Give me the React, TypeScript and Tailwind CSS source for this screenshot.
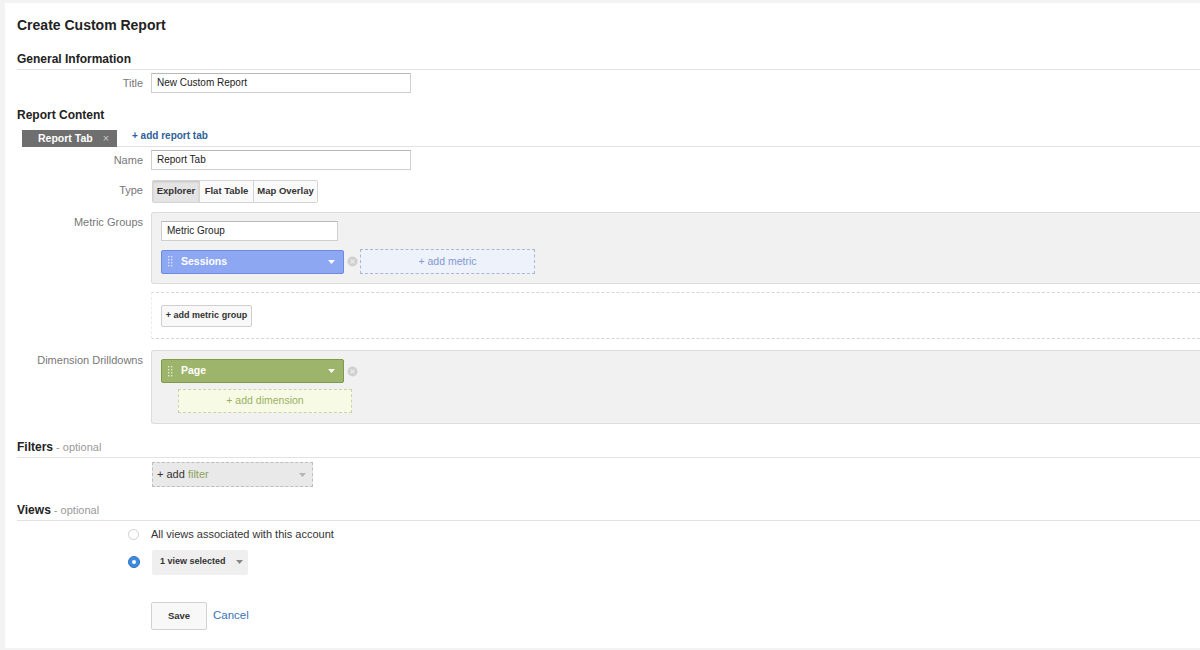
import type { ReactNode } from "react";

// Create Custom Report form (Google Analytics style)

const Caret = ({ color = "#fff" }: { color?: string }) => (
  <svg width="7" height="4" viewBox="0 0 7 4" className="shrink-0">
    <path d="M0 0h7L3.5 4z" fill={color} />
  </svg>
);

const Grip = () => (
  <svg width="5" height="11" viewBox="0 0 5 11" className="shrink-0 opacity-70">
    {[0, 3, 6, 9].map((y) => (
      <g key={y}>
        <rect x="0" y={y} width="1.4" height="1.4" fill="#fff" />
        <rect x="3" y={y} width="1.4" height="1.4" fill="#fff" />
      </g>
    ))}
  </svg>
);

const RemoveDot = () => (
  <svg width="11" height="11" viewBox="0 0 11 11" className="shrink-0">
    <circle cx="5.5" cy="5.5" r="5" fill="#d0d0d0" />
    <path d="M3.6 3.6l3.8 3.8M7.4 3.6L3.6 7.4" stroke="#eee" strokeWidth="1.2" />
  </svg>
);

const SectionHeader = ({
  title,
  optional,
  className = "",
}: {
  title: string;
  optional?: boolean;
  className?: string;
}) => (
  <div className={`h-[20px] leading-[16px] border-b border-[#e2e2e2] ${className}`}>
    <span className="text-[12px] font-bold text-[#222]">{title}</span>
    {optional && <span className="text-[11px] text-[#999]"> - optional</span>}
  </div>
);

const Row = ({
  label,
  children,
  className = "",
}: {
  label?: string;
  children: ReactNode;
  className?: string;
}) => (
  <div className={`flex ${className}`}>
    <div className="w-[134px] shrink-0 pr-[8px] text-right text-[11px] leading-[20px] text-[#777]">
      {label}
    </div>
    <div className="flex-1 min-w-0">{children}</div>
  </div>
);

const TextInput = ({ value, width }: { value: string; width: string }) => (
  <div
    className={`${width} h-[20px] border border-[#cfcfcf] border-t-[#b9b9b9] bg-white px-[5px] text-[10px] leading-[18px] text-[#222]`}
  >
    {value}
  </div>
);

export default function App() {
  return (
    <div
      className="w-[1200px] h-[650px] overflow-hidden bg-[#f3f3f3] pl-[5px] pt-[3px] pb-[2px]"
      style={{ fontFamily: '"Liberation Sans", Arial, sans-serif' }}
    >
      <div className="h-full bg-white pl-[12px]">
        <div className="pt-[12px] h-[31px] text-[14px] font-bold leading-[20px] text-[#222]">
          Create Custom Report
        </div>

        <SectionHeader title="General Information" className="mt-[16px]" />
        <Row label="Title" className="mt-[3px]">
          <TextInput value="New Custom Report" width="w-[260px]" />
        </Row>

        <div className="mt-[14px] h-[16px] text-[12px] font-bold leading-[16px] text-[#222]">
          Report Content
        </div>

        {/* tab strip */}
        <div className="mt-[6px] flex items-end h-[18px]">
          <div className="ml-[5px] w-[95px] h-[17px] bg-[#6f6f6f] flex items-center pl-[16px] gap-[10px] text-[10.5px] font-bold text-white">
            <span>Report Tab</span>
            <span className="text-[#c8c8c8] font-normal text-[11px]">×</span>
          </div>
          <div className="flex-1 h-[18px] border-b border-[#e2e2e2] pl-[15px] text-[10px] font-bold leading-[14px] text-[#2f5f9a]">
            + add report tab
          </div>
        </div>

        <Row label="Name" className="mt-[3px]">
          <TextInput value="Report Tab" width="w-[260px]" />
        </Row>

        <Row label="Type" className="mt-[10px]">
          <div className="ml-[1px] flex w-fit h-[23px] border border-[#d4d4d4] rounded-[2px] text-[9.5px] font-bold text-[#333]">
            <div className="w-[46px] flex items-center justify-center bg-[#e4e4e4] shadow-[inset_0_1px_2px_rgba(0,0,0,0.15)]">
              Explorer
            </div>
            <div className="w-[54px] flex items-center justify-center bg-[#fafafa] border-l border-[#d4d4d4]">
              Flat Table
            </div>
            <div className="w-[64px] flex items-center justify-center bg-[#fafafa] border-l border-[#d4d4d4]">
              Map Overlay
            </div>
          </div>
        </Row>

        {/* metric groups */}
        <Row label="Metric Groups" className="mt-[9px]">
          <div className="h-[72px] bg-[#f1f1f1] border border-r-0 border-[#dcdcdc] rounded-l-[3px] pl-[9px] pt-[8px]">
            <TextInput value="Metric Group" width="w-[177px]" />
            <div className="mt-[8px] flex items-center">
              <div className="w-[183px] h-[24px] bg-[#8da7f2] border border-[#6d8be0] rounded-[2px] flex items-center pl-[6px] pr-[8px] gap-[8px]">
                <Grip />
                <span className="flex-1 text-[10.5px] font-bold text-white">Sessions</span>
                <Caret />
              </div>
              <div className="ml-[3px]">
                <RemoveDot />
              </div>
              <div className="ml-[2px] w-[175px] h-[25px] border border-dashed border-[#a9b6d6] bg-[#eef2fb] flex items-center justify-center text-[10.5px] text-[#8398d2]">
                + add metric
              </div>
            </div>
          </div>
          <div className="mt-[8px] h-[47px] border-y border-l border-dashed border-y-[#d6d6d6] border-l-[#ececec] pl-[9px] pt-[12px]">
            <div className="w-[91px] h-[22px] border border-[#cfcfcf] rounded-[2px] bg-[#f8f8f8] flex items-center justify-center text-[9px] font-bold text-[#333]">
              + add metric group
            </div>
          </div>
        </Row>

        {/* dimension drilldowns */}
        <Row label="Dimension Drilldowns" className="mt-[11px]">
          <div className="h-[74px] bg-[#f1f1f1] border border-r-0 border-[#dcdcdc] rounded-l-[3px] pl-[9px] pt-[8px]">
            <div className="flex items-center">
              <div className="w-[183px] h-[24px] bg-[#9db46b] border border-[#7f9a4c] rounded-[2px] flex items-center pl-[6px] pr-[8px] gap-[8px]">
                <Grip />
                <span className="flex-1 text-[10.5px] font-bold text-white">Page</span>
                <Caret />
              </div>
              <div className="ml-[3px]">
                <RemoveDot />
              </div>
            </div>
            <div className="mt-[6px] ml-[17px] w-[174px] h-[24px] border border-dashed border-[#c9d3a8] bg-[#f7fbe6] flex items-center justify-center text-[10.5px] text-[#9bae63]">
              + add dimension
            </div>
          </div>
        </Row>

        <SectionHeader title="Filters" optional className="mt-[14px]" />
        <Row className="mt-[4px]">
          <div className="ml-[1px] w-[161px] h-[25px] border border-dashed border-[#bdbdbd] bg-[#e9e9e9] flex items-center pl-[4px] pr-[6px] text-[11px]">
            <span className="flex-1">
              <span className="text-[#333]">+ add </span>
              <span className="text-[#8ea25c]">filter</span>
            </span>
            <Caret color="#b5b5b5" />
          </div>
        </Row>

        <SectionHeader title="Views" optional className="mt-[14px]" />

        <div className="mt-[6px] flex items-center h-[14px]">
          <div className="w-[134px] shrink-0 flex justify-end pr-[12px]">
            <div className="w-[11px] h-[11px] rounded-full border border-[#cfcfcf] bg-white" />
          </div>
          <span className="text-[11px] text-[#333]">All views associated with this account</span>
        </div>

        <div className="mt-[8px] flex items-center h-[26px]">
          <div className="w-[134px] shrink-0 flex justify-end pr-[11px]">
            <div className="w-[12px] h-[12px] rounded-full bg-[#3d8be0] border border-[#2f74c4] flex items-center justify-center">
              <div className="w-[4px] h-[4px] rounded-full bg-white" />
            </div>
          </div>
          <div className="ml-[1px] w-[96px] h-[25px] bg-[#efefef] rounded-[2px] flex items-center pl-[8px] gap-[10px] text-[9px] font-bold text-[#333]">
            <span>1 view selected</span>
            <Caret color="#888" />
          </div>
        </div>

        <div className="mt-[27px] flex items-center">
          <div className="w-[134px] shrink-0" />
          <div className="w-[56px] h-[28px] border border-[#d2d2d2] rounded-[2px] bg-[#f8f8f8] flex items-center justify-center text-[9.5px] font-bold text-[#333]">
            Save
          </div>
          <span className="ml-[6px] text-[11.5px] text-[#3a74b4]">Cancel</span>
        </div>
      </div>
    </div>
  );
}
